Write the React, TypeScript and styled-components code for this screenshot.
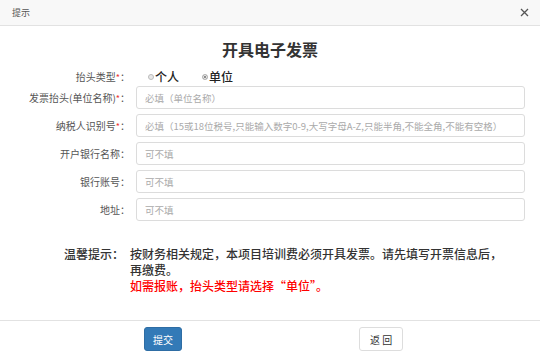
import React, { useState } from 'react';
import styled, { createGlobalStyle } from 'styled-components';

const GlobalStyle = createGlobalStyle`
  html, body {
    margin: 0;
    padding: 0;
    background: #fff;
  }
  body {
    font-family: "Noto Sans CJK SC", "Liberation Sans", sans-serif;
    color: #333;
  }
`;

const Dialog = styled.div`
  width: 540px;
  height: 357px;
  background: #fff;
  display: flex;
  flex-direction: column;
  overflow: hidden;
`;

const Header = styled.div`
  height: 25px;
  display: flex;
  align-items: center;
  justify-content: space-between;
  padding: 0 11px 0 12px;
  background: #f8f8f8;
  border-bottom: 1px solid #e2e2e2;
`;

const HeaderTitle = styled.span`
  font-size: 9px;
  color: #555;
`;

const CloseButton = styled.button`
  border: none;
  background: none;
  padding: 0;
  width: 9px;
  height: 9px;
  display: flex;
  cursor: pointer;
`;

const Body = styled.div`
  flex: 1;
  padding-top: 15px;
`;

const Title = styled.h2`
  margin: 0;
  text-align: center;
  font-size: 16px;
  line-height: 17px;
  font-weight: bold;
  color: #333;
`;

const Form = styled.div`
  margin-top: 10px;
  display: flex;
  flex-direction: column;
  gap: 5px;
  padding-right: 15px;
`;

const Field = styled.div<{ $h: number }>`
  display: grid;
  grid-template-columns: 130px 1fr;
  column-gap: 6px;
  align-items: center;
  height: ${(p) => p.$h}px;
`;

const Label = styled.label`
  text-align: right;
  font-size: 10px;
  color: #555;
  white-space: nowrap;
`;

const Star = styled.span`
  color: #e33;
  font-size: 9px;
`;

const Input = styled.input`
  box-sizing: border-box;
  width: 100%;
  height: 23px;
  border: 1px solid #dcdcdc;
  border-radius: 3px;
  padding: 0 8px;
  font-family: inherit;
  font-size: 9.5px;
  color: #333;
  outline: none;
  &::placeholder {
    color: #aaa;
  }
`;

const RadioGroup = styled.div`
  display: flex;
  align-items: center;
  gap: 23px;
  padding-left: 12px;
`;

const RadioOption = styled.label`
  display: flex;
  align-items: center;
  font-size: 12px;
  font-weight: 500;
  color: #222;
  cursor: pointer;
`;

const RadioDot = styled.span<{ $on: boolean }>`
  box-sizing: border-box;
  width: 6px;
  height: 6px;
  border-radius: 50%;
  border: 1px solid #bbb;
  background: ${(p) => (p.$on ? '#666' : '#e8e8e8')};
  box-shadow: ${(p) => (p.$on ? 'inset 0 0 0 1px #fff' : 'none')};
  margin-right: 1px;
`;

const Notice = styled.div`
  margin-top: 25px;
  display: grid;
  grid-template-columns: 124px 376px;
  column-gap: 6px;
  font-size: 12px;
  line-height: 16px;
  font-weight: 500;
  color: #333;
`;

const NoticeLabel = styled.div`
  text-align: right;
  white-space: nowrap;
`;

const NoticeRed = styled.div`
  color: #f00;
`;

const Footer = styled.div`
  box-sizing: border-box;
  height: 37px;
  border-top: 1px solid #e2e2e2;
  display: flex;
  align-items: flex-start;
  padding: 6px 0 0 144px;
  gap: 177px;
`;

const Button = styled.button<{ $primary?: boolean }>`
  box-sizing: border-box;
  height: 24px;
  padding: 0 ${(p) => (p.$primary ? 8 : 10)}px;
  border-radius: 3px;
  font-family: inherit;
  font-size: 10px;
  cursor: pointer;
  border: 1px solid ${(p) => (p.$primary ? '#2e6da4' : '#ddd')};
  background: ${(p) => (p.$primary ? '#337ab7' : '#fff')};
  color: ${(p) => (p.$primary ? '#fff' : '#333')};
`;

const App: React.FC = () => {
  const [kind, setKind] = useState<'person' | 'unit'>('unit');

  const fields = [
    { label: '发票抬头(单位名称)', required: true, placeholder: '必填（单位名称）' },
    {
      label: '纳税人识别号',
      required: true,
      placeholder: '必填（15或18位税号,只能输入数字0-9,大写字母A-Z,只能半角,不能全角,不能有空格）',
    },
    { label: '开户银行名称', required: false, placeholder: '可不填' },
    { label: '银行账号', required: false, placeholder: '可不填' },
    { label: '地址', required: false, placeholder: '可不填' },
  ];

  return (
    <>
      <GlobalStyle />
      <Dialog>
        <Header>
          <HeaderTitle>提示</HeaderTitle>
          <CloseButton aria-label="close">
            <svg width="9" height="9" viewBox="0 0 9 9">
              <path d="M1 1L8 8M8 1L1 8" stroke="#555" strokeWidth="1.3" />
            </svg>
          </CloseButton>
        </Header>
        <Body>
          <Title>开具电子发票</Title>
          <Form>
            <Field $h={13}>
              <Label>
                抬头类型<Star>*</Star>：
              </Label>
              <RadioGroup>
                <RadioOption onClick={() => setKind('person')}>
                  <RadioDot $on={kind === 'person'} />
                  个人
                </RadioOption>
                <RadioOption onClick={() => setKind('unit')}>
                  <RadioDot $on={kind === 'unit'} />
                  单位
                </RadioOption>
              </RadioGroup>
            </Field>
            {fields.map((f) => (
              <Field $h={23} key={f.label}>
                <Label>
                  {f.label}
                  {f.required && <Star>*</Star>}：
                </Label>
                <Input placeholder={f.placeholder} />
              </Field>
            ))}
          </Form>
          <Notice>
            <NoticeLabel>温馨提示：</NoticeLabel>
            <div>
              <div>按财务相关规定，本项目培训费必须开具发票。请先填写开票信息后，再缴费。</div>
              <NoticeRed>如需报账，抬头类型请选择“单位”。</NoticeRed>
            </div>
          </Notice>
        </Body>
        <Footer>
          <Button $primary>提交</Button>
          <Button>返 回</Button>
        </Footer>
      </Dialog>
    </>
  );
};

export default App;
